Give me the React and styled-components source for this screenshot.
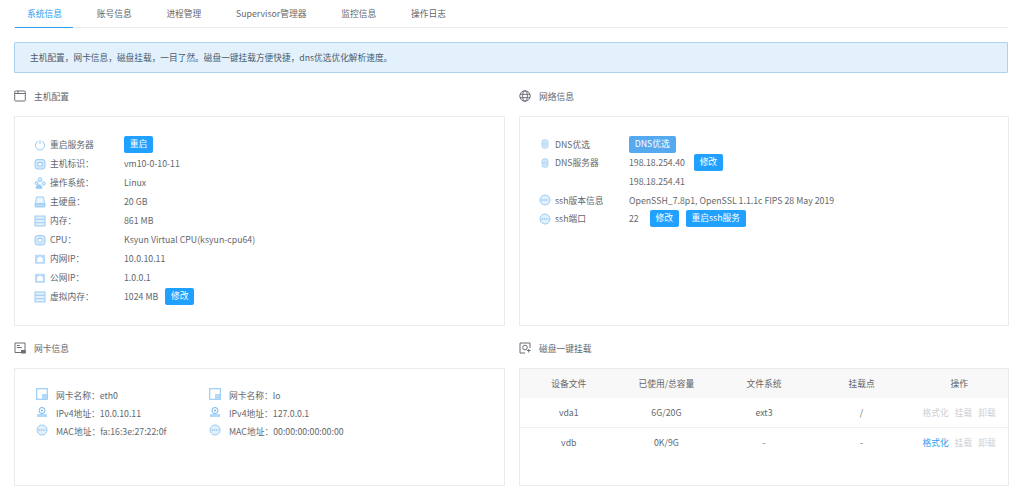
import React from "react"
import styled, { createGlobalStyle } from "styled-components"

const GlobalStyle = createGlobalStyle`
  html, body { margin: 0; padding: 0; background: #fff; }
  body {
    font-family: "Noto Sans CJK SC", "Noto Sans", sans-serif;
    font-size: 8.75px;
    color: #63676d;
  }
`

const Page = styled.div`
  width: 1023px;
  height: 500px;
  overflow: hidden;
  padding: 0 15px 0 14px;
  box-sizing: border-box;
`

const Tabs = styled.div`
  display: flex;
  height: 28px;
  padding-left: 1px;
  border-bottom: 1px solid #e9ebef;
  box-sizing: border-box;
`

const Tab = styled.div`
  padding: 0 11px 0 12px;
  margin-right: 11.7px;
  height: 28px;
  box-sizing: border-box;
  line-height: 27px;
  white-space: nowrap;
  color: ${p => (p.$active ? "#2d9cf0" : "#63676d")};
  border-bottom: 1px solid ${p => (p.$active ? "#2d9cf0" : "transparent")};
`

const Alert = styled.div`
  margin-top: 14px;
  height: 31px;
  box-sizing: border-box;
  padding-left: 15px;
  line-height: 29px;
  font-size: 8.7px;
  color: #4d5a68;
  background: #e3f1fd;
  border: 1px solid #a8d3f5;
  border-radius: 1px;
`

const Grid = styled.div`
  display: grid;
  grid-template-columns: 491px 490px;
  column-gap: 14px;
  margin-top: 12px;
`

const Section = styled.section`
  display: flex;
  flex-direction: column;
`

const Title = styled.div`
  display: flex;
  align-items: center;
  gap: 8px;
  height: 22px;
  margin-bottom: 9px;
`

const Card = styled.div`
  box-sizing: border-box;
  height: ${p => p.$h}px;
  border: 1px solid #e9ebef;
  margin-bottom: ${p => p.$mb || 0}px;
  padding: ${p => p.$pad || "0"};
`

const Row = styled.div`
  display: flex;
  align-items: center;
  height: ${p => p.$h || 19}px;
  white-space: nowrap;
`

const RowIcon = styled.span`
  display: flex;
  justify-content: center;
  width: 16px;
  margin-right: 2px;
`

const Label = styled.span`
  width: 74px;
`

const Value = styled.span`
  margin-right: ${p => p.$mr || 0}px;
`

const Btn = styled.span`
  display: inline-block;
  height: 17px;
  line-height: 16px;
  padding: 0 5.75px;
  margin-right: 7px;
  color: #fff;
  border-radius: 2px;
  background: ${p => (p.$light ? "#55a9ef" : "#20a0ff")};
`

const NicGrid = styled.div`
  display: flex;
`

const NicCol = styled.div`
  width: 173px;
`

const NicRow = styled.div`
  display: flex;
  align-items: center;
  height: 18px;
  white-space: nowrap;
  span + span { margin-left: 8px; }
`

const Table = styled.table`
  width: 100%;
  border-collapse: collapse;
  table-layout: fixed;
  text-align: center;
`

const Th = styled.th`
  height: 29px;
  font-weight: 400;
  background: #f8f8f9;
  padding: 0;
`

const Td = styled.td`
  height: 29px;
  padding: 0;
  border-bottom: ${p => (p.$last ? "none" : "1px solid #eef0f3")};
`

const Op = styled.span`
  margin: 0 3px;
  color: ${p => (p.$on ? "#2d9cf0" : "#cdd0d5")};
`

const Svg = ({ size = 12, children, stroke = "#9accf4" }) => (
  <svg width={size} height={size} viewBox="0 0 12 12" fill="none" stroke={stroke} strokeWidth="1">
    {children}
  </svg>
)

const fill = "#d6e9fa"

const icons = {
  power: <Svg><path d="M4 2.2a4.6 4.6 0 1 0 4 0" /><path d="M6 1v4" /></Svg>,
  host: <Svg><rect x="1" y="1.5" width="10" height="9.5" rx="2.5" fill={fill} /><rect x="4" y="4.5" width="4" height="3.5" fill="#fff" /></Svg>,
  os: <Svg><circle cx="6" cy="2.7" r="2" fill={fill} /><circle cx="9.8" cy="6.5" r="1.6" fill={fill} /><circle cx="2.5" cy="6" r="1.5" fill={fill} /><path d="M2 11.3c0-2.5 1.5-3.5 3-3.5s3 1 3 3.5z" fill="#9accf4" /></Svg>,
  disk: <Svg><path d="M2.5 1h7l1 6.500h-9z" fill="#eef6fd" /><rect x="1" y="7.5" width="10" height="3.5" rx=".5" fill="#b4d8f7" /></Svg>,
  mem: <Svg><rect x="1" y="1" width="10" height="10" fill="#e2f0fc" /><path d="M1 4.300h10M1 7.700h10" /></Svg>,
  cpu: <Svg><rect x="1" y="1.5" width="10" height="9.5" rx="2.5" fill={fill} /><circle cx="6" cy="6.2" r="2.2" fill="#fff" /></Svg>,
  ip: <Svg><rect x="1" y="1.8" width="10" height="9" fill="#b9daf7" stroke="none" /><path d="M3.2 9V5.300L6 3.500l2.800 1.800V9z" fill="#fff" stroke="none" /></Svg>,
  dns: <Svg size={10}><rect x="2.5" y="1" width="7" height="10" rx="2.5" fill={fill} /><circle cx="6" cy="6" r="1.5" fill="#fff" /></Svg>,
  ssh: <Svg><circle cx="6" cy="6" r="5" fill="#e2f0fc" /><path d="M2.500 6h7" strokeDasharray="1.5 .7" stroke="#6fb3ec" /></Svg>,
  nic: <Svg><rect x=".7" y=".7" width="10.6" height="10.6" fill="#fff" strokeWidth="1.2" /><path d="M6 6h5v5H6z" fill="#b4d8f7" stroke="none" /></Svg>,
  pin: <Svg><rect x="1" y="8" width="10" height="3" fill="#b4d8f7" stroke="none" /><circle cx="6" cy="4.5" r="3" fill="#fff" stroke="#6fb3ec" /><circle cx="6" cy="4.5" r="1" fill="#6fb3ec" stroke="none" /></Svg>,
}

const dark = "#6b6f75"

const TitleIcon = ({ name }) => {
  if (name === "window") {
    return <Svg stroke={dark}><rect x=".7" y="1" width="10.6" height="10" rx="1" /><path d="M.7 3.500h10.600M4 3.500V1" /></Svg>
  }
  if (name === "globe") {
    return <Svg stroke={dark}><circle cx="6" cy="6" r="5.2" /><ellipse cx="6" cy="6" rx="2.3" ry="5.2" /><path d="M1 4.300h10M1 7.700h10" /></Svg>
  }
  if (name === "card") {
    return <Svg stroke={dark}><path d="M7 10.500H1V1h10v7" /><path d="M2.800 3.500h3M2.800 5.500h5" /><rect x="7.5" y="8.5" width="3.8" height="2.5" fill={dark} /></Svg>
  }
  return <Svg stroke={dark}><path d="M6 11H1V1h10v5" /><circle cx="6" cy="5.5" r="2.3" /><path d="M8 8.500h3.500M9.700 7v3.500" /></Svg>
}

const hostRows = [
  ["host", "主机标识\uFF1A", "vm10-0-10-11"],
  ["os", "操作系统\uFF1A", "Linux"],
  ["disk", "主硬盘\uFF1A", "20 GB"],
  ["mem", "内存\uFF1A", "861 MB"],
  ["cpu", "CPU\uFF1A", "Ksyun Virtual CPU(ksyun-cpu64)"],
  ["ip", "内网IP\uFF1A", "10.0.10.11"],
  ["ip", "公网IP\uFF1A", "1.0.0.1"],
]

const nics = [
  { name: "eth0", ip: "10.0.10.11", mac: "fa:16:3e:27:22:0f" },
  { name: "lo", ip: "127.0.0.1", mac: "00:00:00:00:00:00" },
]

const disks = [
  { dev: "vda1", used: "6G/20G", fs: "ext3", mount: "/", canFormat: false },
  { dev: "vdb", used: "0K/9G", fs: "-", mount: "-", canFormat: true },
]

export default function App() {
  return (
    <Page>
      <GlobalStyle />
      <Tabs>
        <Tab $active>系统信息</Tab>
        <Tab>账号信息</Tab>
        <Tab>进程管理</Tab>
        <Tab>Supervisor管理器</Tab>
        <Tab>监控信息</Tab>
        <Tab>操作日志</Tab>
      </Tabs>
      <Alert>{"主机配置\uFF0C网卡信息\uFF0C磁盘挂载\uFF0C一目了然\u3002磁盘一键挂载方便快捷\uFF0Cdns优选优化解析速度\u3002"}</Alert>
      <Grid>
        <Section>
          <Title><TitleIcon name="window" />主机配置</Title>
          <Card $h={210} $mb={11} $pad="18px 0 0 17px">
            <Row>
              <RowIcon>{icons.power}</RowIcon><Label>重启服务器</Label>
              <Btn>重启</Btn>
            </Row>
            {hostRows.map(r => (
              <Row key={r[1]}>
                <RowIcon>{icons[r[0]]}</RowIcon><Label>{r[1]}</Label>
                <Value>{r[2]}</Value>
              </Row>
            ))}
            <Row>
              <RowIcon>{icons.mem}</RowIcon><Label>{"虚拟内存\uFF1A"}</Label>
              <Value $mr={7}>1024 MB</Value><Btn>修改</Btn>
            </Row>
          </Card>
        </Section>
        <Section>
          <Title><TitleIcon name="globe" />网络信息</Title>
          <Card $h={210} $mb={11} $pad="18px 0 0 17px">
            <Row $h={18.6}><RowIcon>{icons.dns}</RowIcon><Label>DNS优选</Label><Btn $light>DNS优选</Btn></Row>
            <Row $h={18.6}><RowIcon>{icons.dns}</RowIcon><Label>DNS服务器</Label><Value $mr={9}>198.18.254.40</Value><Btn>修改</Btn></Row>
            <Row $h={18.6}><RowIcon /><Label /><Value>198.18.254.41</Value></Row>
            <Row $h={18.6}><RowIcon>{icons.ssh}</RowIcon><Label>ssh版本信息</Label><Value>OpenSSH_7.8p1, OpenSSL 1.1.1c FIPS 28 May 2019</Value></Row>
            <Row $h={18.6}><RowIcon>{icons.ssh}</RowIcon><Label>ssh端口</Label><Value $mr={11}>22</Value><Btn>修改</Btn><Btn>重启ssh服务</Btn></Row>
          </Card>
        </Section>
        <Section>
          <Title><TitleIcon name="card" />网卡信息</Title>
          <Card $h={118} $pad="17px 0 0 21px">
            <NicGrid>
              {nics.map(n => (
                <NicCol key={n.name}>
                  <NicRow><span>{icons.nic}</span><span>{"网卡名称\uFF1A"}{n.name}</span></NicRow>
                  <NicRow><span>{icons.pin}</span><span>{"IPv4地址\uFF1A"}{n.ip}</span></NicRow>
                  <NicRow><span>{icons.ssh}</span><span>{"MAC地址\uFF1A"}{n.mac}</span></NicRow>
                </NicCol>
              ))}
            </NicGrid>
          </Card>
        </Section>
        <Section>
          <Title><TitleIcon name="disk" />磁盘一键挂载</Title>
          <Card $h={118}>
            <Table>
              <thead>
                <tr>
                  <Th>设备文件</Th>
                  <Th>已使用/总容量</Th>
                  <Th>文件系统</Th>
                  <Th>挂载点</Th>
                  <Th>操作</Th>
                </tr>
              </thead>
              <tbody>
                {disks.map((d, i) => (
                  <tr key={d.dev}>
                    <Td $last={i === 1}>{d.dev}</Td>
                    <Td $last={i === 1}>{d.used}</Td>
                    <Td $last={i === 1}>{d.fs}</Td>
                    <Td $last={i === 1}>{d.mount}</Td>
                    <Td $last={i === 1}>
                      <Op $on={d.canFormat}>格式化</Op><Op>挂载</Op><Op>卸载</Op>
                    </Td>
                  </tr>
                ))}
              </tbody>
            </Table>
          </Card>
        </Section>
      </Grid>
    </Page>
  )
}
